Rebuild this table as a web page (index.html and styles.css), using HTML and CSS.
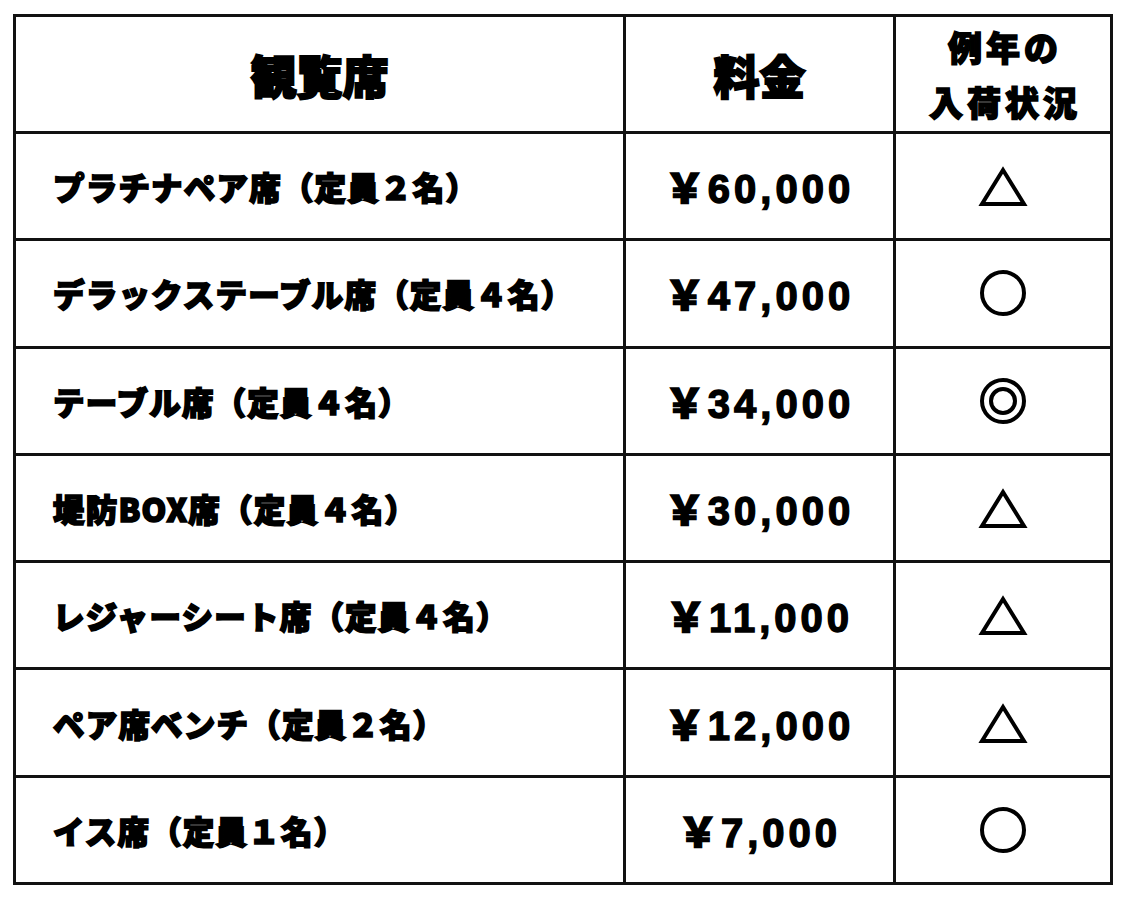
FILE: index.html
```html
<!DOCTYPE html>
<html lang="ja">
<head>
<meta charset="utf-8">
<title>観覧席 料金</title>
<link rel="stylesheet" href="styles.css">
</head>
<body>
<table class="seats">
  <colgroup>
    <col class="c-name">
    <col class="c-price">
    <col class="c-status">
  </colgroup>
  <thead>
    <tr>
      <th class="h-big">観覧席</th>
      <th class="h-big">料金</th>
      <th class="h-small">例年の<br>入荷状況</th>
    </tr>
  </thead>
  <tbody>
    <tr>
      <td class="name">プラチナペア席（定員２名）</td>
      <td class="price"><span class="yen">￥</span>60,000</td>
      <td class="status"><svg class="mark" viewBox="0 0 50 50"><polygon points="25,9 46,43 4,43" fill="none" stroke="#000" stroke-width="4"/></svg></td>
    </tr>
    <tr>
      <td class="name">デラックステーブル席（定員４名）</td>
      <td class="price"><span class="yen">￥</span>47,000</td>
      <td class="status"><svg class="mark" viewBox="0 0 50 50"><circle cx="25" cy="25" r="21" fill="none" stroke="#000" stroke-width="4"/></svg></td>
    </tr>
    <tr>
      <td class="name">テーブル席（定員４名）</td>
      <td class="price"><span class="yen">￥</span>34,000</td>
      <td class="status"><svg class="mark" viewBox="0 0 50 50"><circle cx="25" cy="25" r="21" fill="none" stroke="#000" stroke-width="4"/><circle cx="25" cy="25" r="12" fill="none" stroke="#000" stroke-width="4"/></svg></td>
    </tr>
    <tr>
      <td class="name">堤防BOX席（定員４名）</td>
      <td class="price"><span class="yen">￥</span>30,000</td>
      <td class="status"><svg class="mark" viewBox="0 0 50 50"><polygon points="25,9 46,43 4,43" fill="none" stroke="#000" stroke-width="4"/></svg></td>
    </tr>
    <tr>
      <td class="name">レジャーシート席（定員４名）</td>
      <td class="price"><span class="yen">￥</span>11,000</td>
      <td class="status"><svg class="mark" viewBox="0 0 50 50"><polygon points="25,9 46,43 4,43" fill="none" stroke="#000" stroke-width="4"/></svg></td>
    </tr>
    <tr>
      <td class="name">ペア席ベンチ（定員２名）</td>
      <td class="price"><span class="yen">￥</span>12,000</td>
      <td class="status"><svg class="mark" viewBox="0 0 50 50"><polygon points="25,9 46,43 4,43" fill="none" stroke="#000" stroke-width="4"/></svg></td>
    </tr>
    <tr>
      <td class="name">イス席（定員１名）</td>
      <td class="price"><span class="yen">￥</span>7,000</td>
      <td class="status"><svg class="mark" viewBox="0 0 50 50"><circle cx="25" cy="25" r="21" fill="none" stroke="#000" stroke-width="4"/></svg></td>
    </tr>
  </tbody>
</table>
</body>
</html>
```

FILE: styles.css
```css
html, body {
  margin: 0;
  padding: 0;
  background: #fff;
}

body {
  padding: 14px 0 0 13px;
  font-family: "Noto Sans CJK JP", "Noto Sans", sans-serif;
  color: #000;
}

.seats {
  border-collapse: collapse;
  table-layout: fixed;
  width: 1100px;
  text-spacing-trim: space-all;
}

.c-name { width: 610px; }
.c-price { width: 270px; }
.c-status { width: 217px; }

.seats th,
.seats td {
  border: 3px solid #111;
  padding: 0;
  vertical-align: middle;
}

.seats thead tr { height: 117px; }
.seats tbody tr { height: 107.3px; }

.h-big {
  font-weight: 900;
  font-size: 46px;
  line-height: 1;
  text-align: center;
  -webkit-text-stroke: 2px #000;
}

.h-small {
  font-weight: 900;
  font-size: 34px;
  line-height: 55px;
  letter-spacing: 4px;
  text-align: center;
  padding-left: 4px !important;
  -webkit-text-stroke: 1.6px #000;
}

.name {
  font-weight: 900;
  font-size: 31.5px;
  letter-spacing: 1.2px;
  padding-left: 37px !important;
  text-align: left;
  white-space: nowrap;
  -webkit-text-stroke: 1.7px #000;
}

.price {
  font-family: "Liberation Sans", Arial, sans-serif;
  font-weight: 700;
  font-size: 40px;
  letter-spacing: 4px;
  text-align: center;
  white-space: nowrap;
  -webkit-text-stroke: 1.4px #000;
}

.yen {
  font-family: "Noto Sans CJK JP", sans-serif;
  font-weight: 900;
  letter-spacing: 0;
  margin-right: 3px;
}

.status {
  text-align: center;
}

.mark {
  display: block;
  width: 50px;
  height: 50px;
  margin: 0 auto;
}
```
